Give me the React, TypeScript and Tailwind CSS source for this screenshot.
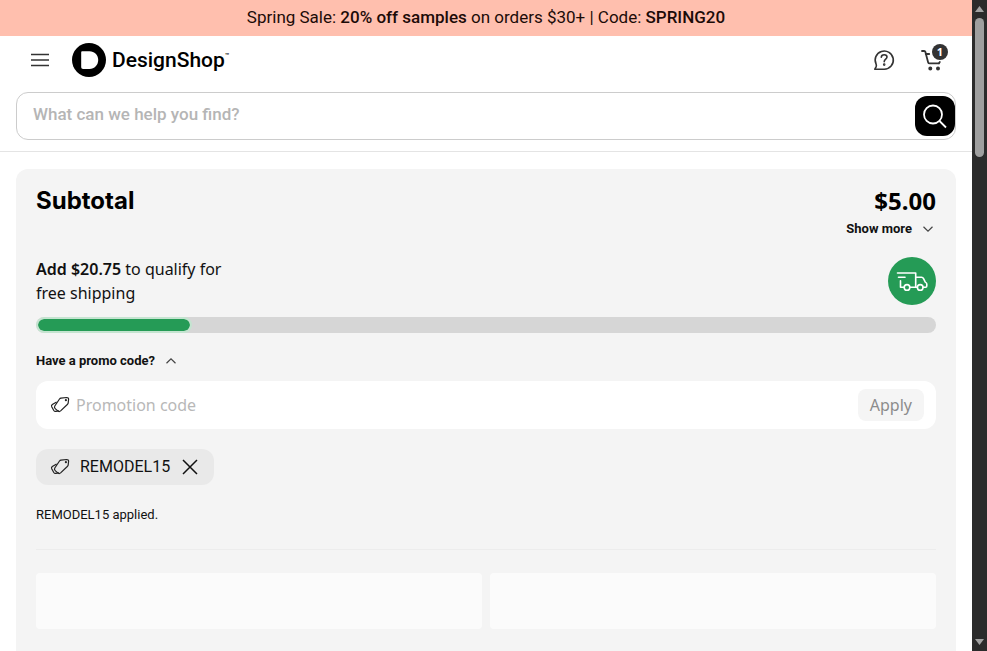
import { useState } from 'react';

const SUBTOTAL = 5;
const FREE_SHIPPING_MIN = 25.75;
const SHIPPING_PROGRESS = 17.3;

function formatPrice(price: number): string {
  return price.toLocaleString('en-US', { style: 'currency', currency: 'USD' });
}

function MenuIcon() {
  return (
    <svg width="24" height="24" viewBox="0 0 24 24" fill="none" stroke="#333" strokeWidth="1.5">
      <path d="M3 6.5h18M3 12h18M3 17.5h18" />
    </svg>
  );
}

function LogoMark() {
  return (
    <svg width="34" height="34" viewBox="0 0 34 34">
      <circle cx="17" cy="17" r="17" fill="#000" />
      <path d="M9.2 9.4c0-.8.4-1.2 1.2-1.2h7.1c5 0 8.7 3.8 8.7 8.8s-3.7 8.900-8.700 8.900h-6.300c-1.300 0-2-.7-2-2z" fill="#fff" />
    </svg>
  );
}

function HelpIcon() {
  return (
    <svg width="24" height="24" viewBox="0 0 24 24" fill="none" stroke="#333" strokeWidth="1.6" strokeLinecap="round" strokeLinejoin="round">
      <path d="M2.800 21.200h9.400a9.100 9.100 0 1 0-8.100-5c.5 1 .4 1.700 0 2.700z" />
      <path d="M9.300 9.200c.1-1.600 1.200-2.500 2.900-2.500s2.800 1 2.800 2.400c0 2-2.800 2.200-2.800 4.600" />
      <circle cx="12.200" cy="16.600" r=".5" fill="#333" />
    </svg>
  );
}

function CartIcon() {
  return (
    <svg width="24" height="24" viewBox="0 0 24 24" fill="none" stroke="#333" strokeWidth="1.800" strokeLinecap="round" strokeLinejoin="round">
      <path d="M2 3h2.200c.6 0 1 .3 1.200.9l2.700 10.300c.2.800.7 1.200 1.500 1.200h9.200" />
      <path d="M5.800 6h3.400" />
      <path d="M19 15.200l.8-1.200" />
      <circle cx="10.300" cy="20.500" r="1.100" fill="#333" />
      <circle cx="18" cy="20.500" r="1.100" fill="#333" />
    </svg>
  );
}

function SearchIcon() {
  return (
    <svg width="32" height="32" viewBox="0 0 32 32" fill="none" stroke="#fff" strokeWidth="1.800">
      <circle cx="14" cy="14.500" r="9" />
      <path d="M20.500 21l6.500 6.500" />
    </svg>
  );
}

function TruckIcon() {
  return (
    <svg width="32" height="32" viewBox="0 0 32 32" fill="none" stroke="#fff" strokeWidth="1.600" strokeLinecap="round" strokeLinejoin="round">
      <path d="M1.500 8h18.200v14.200h-6" />
      <path d="M2.500 12.200h6.500" />
      <path d="M4.500 15.800v6.400h3.700" />
      <path d="M19.700 12.200h5.900c.9 0 1.400.4 1.800 1.200l1.900 3.700c1 .5 1.500 1.100 1.500 2v1.900c0 .8-.4 1.200-1.200 1.200h-2.500" />
      <path d="M19.700 22.200h1.600" />
      <circle cx="11" cy="22.400" r="2.800" />
      <circle cx="24.200" cy="22.400" r="2.800" />
    </svg>
  );
}

function TagIcon() {
  return (
    <svg width="20" height="20" viewBox="0 0 20 20" fill="none" stroke="#222" strokeWidth="1.200" strokeLinejoin="round" strokeLinecap="round">
      <path d="M11 3.100l5.600-.6c1.300 0 2 .7 2 1.800l-.4 3.500c-.1.700-.4 1.200-.9 1.700l-6.700 6.400c-.8.700-1.700.8-2.500.2l-2.900-2.500c-.9-.8-1-1.600-.4-2.600l4.700-7c.4-.5.900-.8 1.500-.9z" />
      <path d="M6.200 7.200L2.300 9.600c-.8.600-1 1.300-.6 2.100l2.100 3.800c.5.800 1.200 1.100 2.100.9l2.500-.6" />
      <circle cx="15.900" cy="5.200" r=".5" />
    </svg>
  );
}

function Chevron({ up = false }: { up?: boolean }) {
  return (
    <svg width="16" height="16" viewBox="0 0 16 16" fill="none" stroke="#444" strokeWidth="1.200">
      <path d={up ? 'M3.500 10.200L8 5.800l4.500 4.400' : 'M3.500 5.800L8 10.200l4.500-4.400'} />
    </svg>
  );
}

function CloseIcon() {
  return (
    <svg width="16" height="16" viewBox="0 0 16 16" fill="none" stroke="#111" strokeWidth="1.500">
      <path d="M1 1l14 14M15 1L1 15" />
    </svg>
  );
}

function Header() {
  return (
    <header className="border-b border-[#e4e4e4] px-4 pb-[11px]">
      <div className="mb-2 flex h-12 items-center">
        <button type="button" aria-label="Menu" className="flex size-12 items-center justify-center">
          <MenuIcon />
        </button>
        <a href="#" className="ml-2 flex items-center gap-[6px]">
          <LogoMark />
          <span className="flex items-start font-['Roboto'] text-[21px] leading-6 font-medium text-black">
            DesignShop
            <span className="text-[7px] leading-4">™</span>
          </span>
        </a>
        <div className="ml-auto flex">
          <button type="button" aria-label="Help" className="flex size-12 items-center justify-center">
            <HelpIcon />
          </button>
          <button type="button" aria-label="Cart" className="relative flex size-12 items-center justify-center">
            <CartIcon />
            <span className="absolute top-2 right-2 flex size-4 items-center justify-center rounded-full bg-[#333] text-[11px] font-bold text-white">
              1
            </span>
          </button>
        </div>
      </div>
      <form className="flex h-12 items-center rounded-xl border border-[#ccc] pl-4" onSubmit={(e) => e.preventDefault()}>
        <input
          type="search"
          aria-label="Search"
          placeholder="What can we help you find?"
          className="min-w-0 flex-1 pb-[2px] font-['Roboto'] text-[17px] font-medium outline-none placeholder:text-[#b5b5b5]"
        />
        <button type="submit" aria-label="Search" className="flex size-10 items-center justify-center rounded-xl bg-black">
          <SearchIcon />
        </button>
      </form>
    </header>
  );
}

function PromoCode() {
  const [open, setOpen] = useState(true);
  const [applied, setApplied] = useState(true);

  return (
    <>
      <button type="button" onClick={() => setOpen(!open)} className="mt-5 flex items-center gap-2 font-['Roboto'] text-[13px] leading-4 font-bold">
        Have a promo code?
        <Chevron up={open} />
      </button>
      {open && (
        <form className="mt-3 flex h-12 items-center rounded-xl bg-white pr-3 pl-[14px]" onSubmit={(e) => e.preventDefault()}>
          <TagIcon />
          <input
            type="text"
            aria-label="Promotion code"
            placeholder="Promotion code"
            className="ml-[6px] min-w-0 flex-1 outline-none placeholder:text-[#b8b8b8]"
          />
          <button type="submit" className="h-8 rounded-lg bg-[#f5f5f5] px-3 text-[#8c8c8c]">
            Apply
          </button>
        </form>
      )}
      {applied && (
        <>
          <div className="mt-5 flex h-9 w-fit items-center rounded-xl bg-[#e9e9e9] pr-4 pl-[14px]">
            <TagIcon />
            <span className="mr-3 ml-[10px] font-['Roboto']">REMODEL15</span>
            <button type="button" aria-label="Remove REMODEL15" onClick={() => setApplied(false)}>
              <CloseIcon />
            </button>
          </div>
          <p className="mt-5 font-['Roboto'] text-[13px] leading-5">REMODEL15 applied.</p>
        </>
      )}
    </>
  );
}

function Scrollbar() {
  return (
    <div className="flex w-[15px] shrink-0 flex-col items-center justify-between bg-[#2b2b2b] py-[6px]" aria-hidden="true">
      <div className="flex flex-col items-center gap-[6px]">
        <svg width="9" height="6" viewBox="0 0 9 6">
          <path d="M0 6L4.500 0 9 6z" fill="#a3a3a3" />
        </svg>
        <div className="h-[139px] w-[9px] rounded-full bg-[#9f9f9f]" />
      </div>
      <svg width="9" height="6" viewBox="0 0 9 6">
        <path d="M0 0L4.500 6 9 0z" fill="#a3a3a3" />
      </svg>
    </div>
  );
}

export default function App() {
  return (
    <div className="flex h-screen overflow-hidden bg-white font-['Noto_Sans',sans-serif] text-base text-[#111]">
      <div className="min-w-0 flex-1 overflow-hidden">
        <div className="flex h-9 items-center justify-center bg-[#ffbfae] font-['Roboto'] text-[17px] text-[#1c0b08]">
          <p>
            Spring Sale: <b className="font-medium">20% off samples</b> on orders $30+ | Code: <b className="font-medium">SPRING20</b>
          </p>
        </div>
        <Header />
        <main className="px-4 pt-[17px]">
          <section className="rounded-xl bg-[#f4f4f4] p-5 pb-12">
            <div className="flex items-center justify-between text-2xl leading-6 font-bold text-black">
              <h1 className="font-['Inter']">Subtotal</h1>
              <span>{formatPrice(SUBTOTAL)}</span>
            </div>
            <button type="button" className="mt-2 ml-auto flex items-center gap-2 font-['Roboto'] text-[13px] leading-4 font-bold">
              Show more
              <Chevron />
            </button>

            <div className="mt-5 flex items-center justify-between">
              <p className="max-w-[200px] leading-6">
                <b className="font-semibold">{`Add ${formatPrice(FREE_SHIPPING_MIN - SUBTOTAL)}`}</b> to qualify for free shipping
              </p>
              <div className="flex size-12 items-center justify-center rounded-full bg-[#259b56]">
                <TruckIcon />
              </div>
            </div>
            <div className="mt-3 h-4 overflow-hidden rounded-full bg-[#d6d6d6]">
              <div
                className="h-full rounded-full border-2 border-[#c4e4d0] bg-[#259b56] bg-clip-padding"
                style={{ width: `${SHIPPING_PROGRESS}%` }}
              />
            </div>

            <PromoCode />

            <hr className="mt-6 border-[#ececec]" />
            <div className="mt-[23px] grid grid-cols-2 gap-2">
              <div className="h-14 rounded bg-[#fbfbfb]" />
              <div className="h-14 rounded bg-[#fbfbfb]" />
            </div>
          </section>
        </main>
      </div>
      <Scrollbar />
    </div>
  );
}
